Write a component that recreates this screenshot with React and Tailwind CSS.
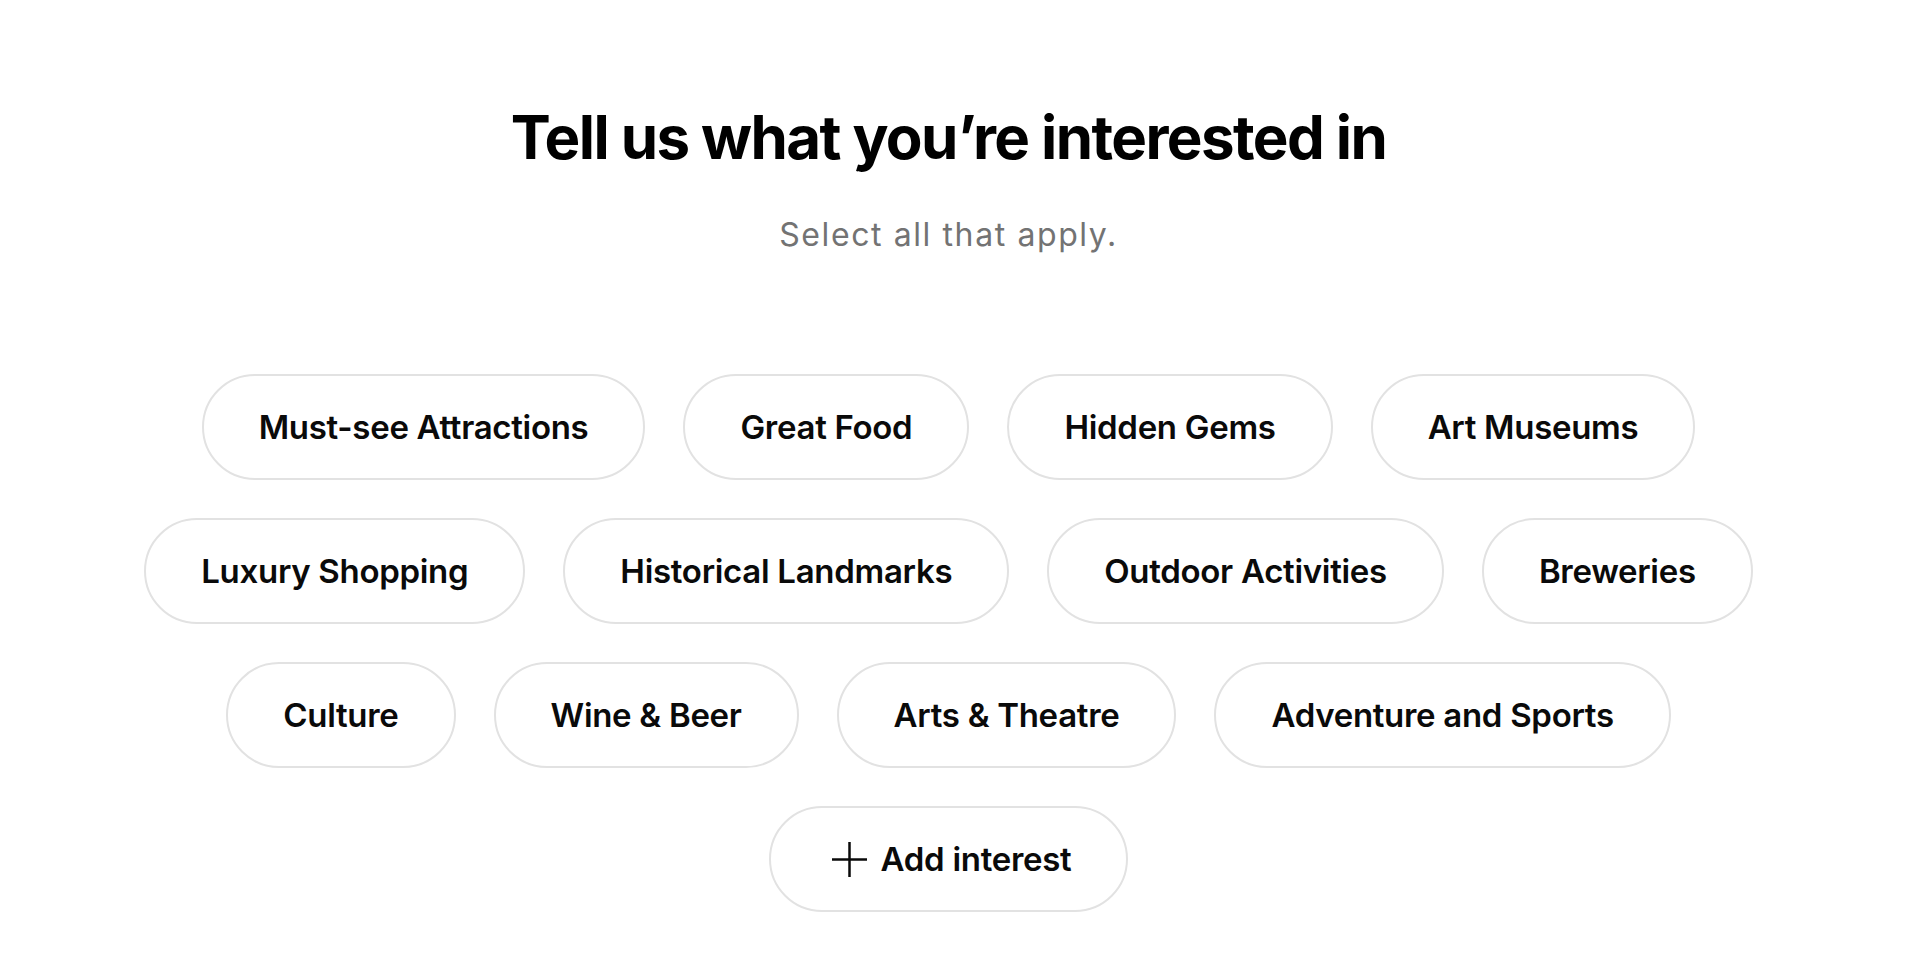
import React from "react";

const rows = [
  ["Must-see Attractions", "Great Food", "Hidden Gems", "Art Museums"],
  ["Luxury Shopping", "Historical Landmarks", "Outdoor Activities", "Breweries"],
  ["Culture", "Wine & Beer", "Arts & Theatre", "Adventure and Sports"],
];

function Pill({ children }) {
  return (
    <button
      type="button"
      className="flex h-[106px] items-center justify-center gap-[14px] rounded-full border-2 border-[#e2e2e2] bg-white px-[55px] text-[33px] font-semibold leading-none text-[#0a0a0a] tracking-[-0.3px]"
    >
      {children}
    </button>
  );
}

export default function App() {
  return (
    <div
      className="min-h-[958px] w-[1897px] bg-white"
      style={{ fontFamily: "Inter, 'Noto Sans', sans-serif" }}
    >
      <div className="flex flex-col items-center pt-[101px]">
        <h1 className="text-[60px] font-bold leading-[72px] tracking-[-1.6px] text-black">
          Tell us what you’re interested in
        </h1>
        <p className="mt-[42px] text-[32px] leading-[40px] tracking-[1.6px] text-[#737373]">
          Select all that apply.
        </p>
        <div className="mt-[119px] flex flex-col items-center gap-[38px]">
          {rows.map((row, i) => (
            <div key={i} className="flex justify-center gap-[38px]">
              {row.map((label) => (
                <Pill key={label}>{label}</Pill>
              ))}
            </div>
          ))}
          <div className="flex justify-center">
            <button
              type="button"
              className="flex h-[106px] items-center justify-center gap-[14px] rounded-full border-2 border-[#e2e2e2] bg-white pl-[61px] pr-[55px] text-[33px] font-semibold leading-none text-[#0a0a0a] tracking-[-0.3px]"
            >
              <svg width="35" height="35" viewBox="0 0 35 35" aria-hidden="true">
                <line x1="0" y1="17.5" x2="35" y2="17.5" stroke="#0a0a0a" strokeWidth="2.5" />
                <line x1="17.5" y1="0" x2="17.5" y2="35" stroke="#0a0a0a" strokeWidth="2.5" />
              </svg>
              <span>Add interest</span>
            </button>
          </div>
        </div>
      </div>
    </div>
  );
}
